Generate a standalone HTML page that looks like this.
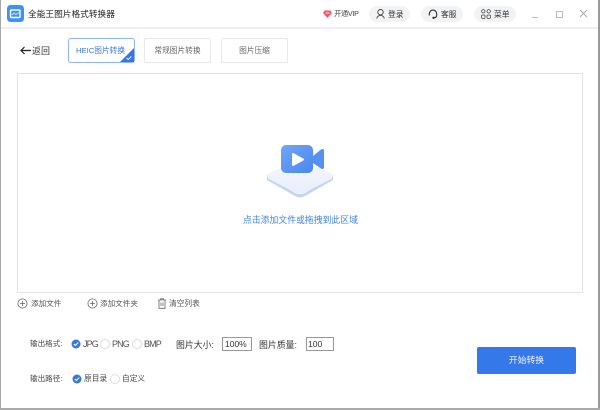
<!DOCTYPE html>
<html lang="zh"><head><meta charset="utf-8"><style>
html,body{margin:0;padding:0;background:#fff}
body{position:relative;width:600px;height:410px;overflow:hidden;font-family:"Liberation Sans","Noto Sans CJK SC",sans-serif;color:#444}
#w{position:absolute;left:0;top:0;width:600px;height:410px;filter:blur(.3px)}
.a{position:absolute;white-space:nowrap}
.t{line-height:12px}
.pill{position:absolute;top:6px;height:16px;border-radius:8px;background:#f2f3f5}
.tab{position:absolute;top:38px;height:23px;border:1px solid #e8e8e8;border-radius:2px;text-align:center;line-height:23px;font-size:7.7px;color:#666;background:#fff}
</style></head><body><div id="w">
<div class="a" style="left:0;top:0;width:1px;height:410px;background:#a8a8a8"></div>
<div class="a" style="left:598px;top:0;width:2px;height:410px;background:#999"></div>
<div class="a" style="left:0;top:408px;width:600px;height:2px;background:#aaa"></div>
<div class="a" style="left:1px;top:27px;width:597px;height:2px;background:#f0f0f0"></div>

<svg class="a" style="left:7px;top:5px" width="17" height="17" viewBox="0 0 17 17"><rect width="17" height="17" rx="3.5" fill="#3d93f5"/><rect x="3.5" y="5" width="9.5" height="7.5" rx="1" fill="none" stroke="#fff" stroke-width="1.4"/><path d="M5 10l2-2 2 1.500 3-2" stroke="#bfe0ff" fill="none"/></svg>
<div class="a t" style="left:28px;top:8px;font-size:8.7px;color:#222">全能王图片格式转换器</div>

<svg class="a" style="left:323px;top:10px" width="9" height="8" viewBox="0 0 9 8"><path d="M1.500 0.500h6L9 3 4.500 8 0 3z" fill="#ee5a6c"/><path d="M2.500 3h4" stroke="#fff" stroke-width=".8"/></svg>
<div class="a t" style="left:334px;top:8px;font-size:7.200px;color:#444;letter-spacing:-.25px">开通VIP</div>

<div class="pill" style="left:369px;width:41px"></div>
<svg class="a" style="left:376px;top:9px" width="9" height="10" viewBox="0 0 9 10" fill="none" stroke="#444" stroke-width=".9"><circle cx="4.500" cy="3.200" r="2.700"/><path d="M.7 9.500C1.200 7.500 2.500 6.400 4.500 6.400s3.300 1.100 3.800 3.100"/></svg>
<div class="a t" style="left:388px;top:9px;font-size:7.800px;color:#333">登录</div>

<div class="pill" style="left:421px;width:42px"></div>
<svg class="a" style="left:428px;top:9px" width="10" height="10" viewBox="0 0 10 10" fill="none" stroke="#333" stroke-width="1.100"><path d="M1.300 6.500V4.800a3.700 3.700 0 0 1 7.400 0v1.700"/><path d="M8.700 6.500C8.500 8 7.500 8.800 6 8.800"/><circle cx="5.500" cy="8.800" r=".6" fill="#333"/></svg>
<div class="a t" style="left:441px;top:9px;font-size:7.800px;color:#333">客服</div>

<div class="pill" style="left:474px;width:42px"></div>
<svg class="a" style="left:481px;top:9px" width="10" height="10" viewBox="0 0 10 10" fill="none" stroke="#444" stroke-width=".8"><circle cx="2.300" cy="2.300" r="1.700"/><circle cx="7.700" cy="2.300" r="1.700"/><rect x=".6" y="6" width="3.400" height="3.400" rx=".8"/><rect x="6" y="6" width="3.400" height="3.400" rx=".8"/></svg>
<div class="a t" style="left:494px;top:9px;font-size:7.800px;color:#333">菜单</div>

<div class="a" style="left:532px;top:17px;width:6px;height:1px;background:#bbb"></div>
<div class="a" style="left:556px;top:11px;width:5px;height:5px;border:1px solid #bbb"></div>
<svg class="a" style="left:579px;top:9px" width="9" height="9" viewBox="0 0 9 9"><path d="M1 1l7 7M8 1l-7 7" stroke="#aaa" stroke-width="1"/></svg>

<svg class="a" style="left:20px;top:46px" width="11" height="9" viewBox="0 0 11 9" fill="none" stroke="#222" stroke-width="1.200"><path d="M11 4.500H1.200M4.500 1L1 4.500 4.500 8"/></svg>
<div class="a t" style="left:32px;top:45px;font-size:9px;color:#333">返回</div>

<div class="tab" style="left:68px;width:65px;border-color:#8db5ee;color:#3f7ade;border-radius:3px"><span style="position:relative;left:-1px">HEIC图片转换</span></div>
<svg class="a" style="left:120px;top:48px" width="14" height="14" viewBox="0 0 14 14"><path d="M14 0v14H0z" fill="#3578e5"/><path d="M6.500 10l1.800 1.500 3-3" stroke="#fff" fill="none"/></svg>
<div class="tab" style="left:144px;width:65px">常规图片转换</div>
<div class="tab" style="left:221px;width:65px">图片压缩</div>

<div class="a" style="left:17px;top:73px;width:564px;height:218px;border:1px solid #e3e3e3"></div>

<svg class="a" style="left:265px;top:144px" width="70" height="60" viewBox="0 0 70 60">
<defs><linearGradient id="g" x1="0" y1="0" x2="1" y2="1"><stop offset="0" stop-color="#6fa6f8"/><stop offset="1" stop-color="#4a86f0"/></linearGradient><linearGradient id="p" x1="0" y1="0" x2="0" y2="1"><stop offset="0" stop-color="#f5f7fe"/><stop offset="1" stop-color="#e9eefb"/></linearGradient></defs>
<path d="M2 31 L30 49 Q35 51 40 49 L68 31 L68 36 L40 52 Q35 55 30 52 L2 36 Z" fill="#c6d4f3"/>
<path d="M4 29 L28 19 Q35 16 42 19 L66 29 Q69 32 66 35 L41 48 Q35 51 29 48 L4 35 Q1 32 4 29Z" fill="url(#p)"/>
<rect x="16" y="1" width="32" height="28" rx="5" fill="url(#g)"/>
<path d="M48 12 L56 5.500 Q59 4 59 7 V23 Q59 26 56 24.500 L48 19Z" fill="#5590f2"/>
<path d="M28 10 L38 15.500 L28 21Z" fill="#fff" stroke="#fff" stroke-linejoin="round" stroke-width="2"/>
</svg>
<div class="a t" style="left:243px;top:214px;font-size:8.850px;color:#3f84e0">点击添加文件或拖拽到此区域</div>

<svg class="a" style="left:17px;top:298px" width="11" height="11" viewBox="0 0 11 11" fill="none" stroke="#666" stroke-width=".8"><circle cx="5.500" cy="5.500" r="4.600"/><path d="M5.500 3v5M3 5.500h5"/></svg>
<div class="a t" style="left:31px;top:298px;font-size:7.600px;color:#555">添加文件</div>
<svg class="a" style="left:87px;top:298px" width="11" height="11" viewBox="0 0 11 11" fill="none" stroke="#666" stroke-width=".8"><circle cx="5.500" cy="5.500" r="4.600"/><path d="M5.500 3v5M3 5.500h5"/></svg>
<div class="a t" style="left:100px;top:298px;font-size:7.600px;color:#555">添加文件夹</div>
<svg class="a" style="left:157px;top:298px" width="10" height="11" viewBox="0 0 10 11" fill="none" stroke="#666" stroke-width=".8"><path d="M1 2h8M3.500 2V.8h3V2M2 2v8.300h6V2M4 4.500v3.500M6 4.500v3.500"/></svg>
<div class="a t" style="left:169px;top:298px;font-size:7.700px;color:#555">清空列表</div>

<div class="a t" style="left:30px;top:338px;font-size:7.600px;color:#444">输出格式:</div>
<svg class="a" style="left:71px;top:339px" width="10" height="10" viewBox="0 0 10 10"><circle cx="5" cy="5" r="4.500" fill="#3578e5"/><path d="M2.800 5l1.600 1.500 2.800-3" stroke="#fff" fill="none"/></svg>
<div class="a t" style="left:83px;top:338px;font-size:9px;letter-spacing:-.9px;color:#555">JPG</div>
<div class="a" style="left:100px;top:339px;width:8px;height:8px;border:1px solid #ddd;border-radius:50%"></div>
<div class="a t" style="left:112px;top:338px;font-size:9px;letter-spacing:-.9px;color:#555">PNG</div>
<div class="a" style="left:132px;top:339px;width:8px;height:8px;border:1px solid #ddd;border-radius:50%"></div>
<div class="a t" style="left:144px;top:338px;font-size:9px;letter-spacing:-.9px;color:#555">BMP</div>
<div class="a t" style="left:176px;top:339px;font-size:8.900px;color:#333">图片大小:</div>
<div class="a" style="left:222px;top:337px;width:26px;height:12px;border:1px solid #999;font-size:8.500px;line-height:13px;padding-left:2px;color:#333;box-sizing:content-box">100%</div>
<div class="a t" style="left:259px;top:339px;font-size:8.900px;color:#333">图片质量:</div>
<div class="a" style="left:306px;top:337px;width:25px;height:12px;border:1px solid #999;font-size:8.500px;line-height:13px;padding-left:1px;color:#333">100</div>

<div class="a t" style="left:30px;top:373px;font-size:7.600px;color:#444">输出路径:</div>
<svg class="a" style="left:72px;top:374px" width="10" height="10" viewBox="0 0 10 10"><circle cx="5" cy="5" r="4.500" fill="#3578e5"/><path d="M2.800 5l1.600 1.500 2.800-3" stroke="#fff" fill="none"/></svg>
<div class="a t" style="left:84px;top:373px;font-size:7.700px;color:#444">原目录</div>
<div class="a" style="left:110px;top:374px;width:8px;height:8px;border:1px solid #ddd;border-radius:50%"></div>
<div class="a t" style="left:122px;top:373px;font-size:7.700px;color:#444">自定义</div>

<div class="a" style="left:477px;top:347px;width:99px;height:27px;border-radius:2px;background:#3578ea;color:#f2f6ff;font-size:8.800px;line-height:27px;text-align:center">开始转换</div>
</div></body></html>
